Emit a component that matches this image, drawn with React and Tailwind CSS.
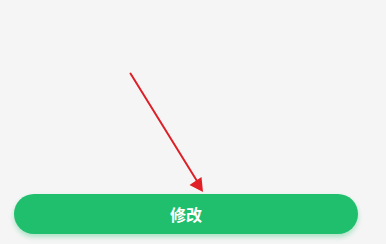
export default function App() {
  return (
    <div className="relative flex h-[244px] w-[386px] flex-col justify-end overflow-hidden bg-[#f5f5f5] pb-[10px] font-['Noto_Sans_CJK_SC',sans-serif]">
      <button
        type="button"
        className="ml-[14px] flex h-[40px] w-[344px] items-center justify-center rounded-full bg-[#1fbf6e] text-[16px] font-bold text-white shadow-[0_3px_5px_rgba(31,191,110,0.35)]"
      >
        修改
      </button>

      {/* annotation arrow */}
      <svg className="pointer-events-none absolute inset-0" width="386" height="244" viewBox="0 0 386 244">
        <line x1="130.5" y1="73.5" x2="197" y2="181" stroke="#dd2027" strokeWidth="2" strokeLinecap="round" />
        <polygon points="203,192 189.5,185 201.5,177" fill="#e01f26" />
      </svg>
    </div>
  )
}
